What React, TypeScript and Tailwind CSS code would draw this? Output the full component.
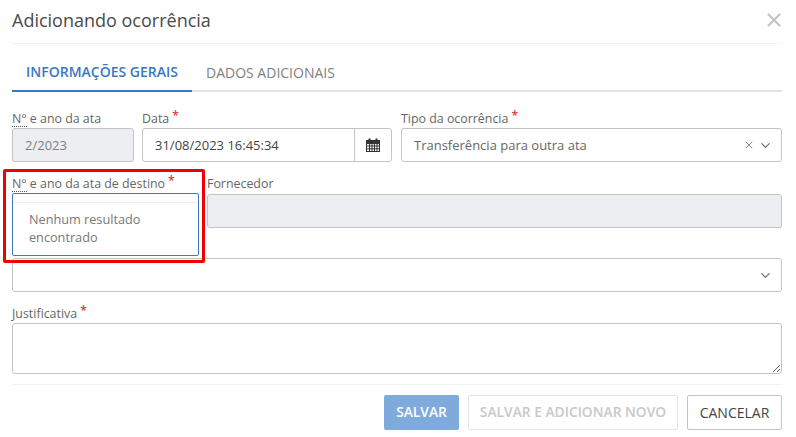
// App.tsx
import React from 'react';
import { X, ChevronDown } from 'lucide-react';

const Req = () => <span className="relative -top-[3px] ml-[3px] text-[12px] font-semibold leading-none text-[#e3342f]">*</span>;

const Label = ({ children, required, dotted }: { children: React.ReactNode; required?: boolean; dotted?: boolean }) => (
  <div className="relative flex h-[16px] items-center whitespace-nowrap pt-[2px] text-[12.4px] text-[#666]">
    {children}
    {required && <Req />}
    {dotted && <span className="absolute left-0 top-[16px] w-[15px] border-b border-dotted border-[#555]" />}
  </div>
);

const Calendar = () => (
  <svg width="14" height="14" viewBox="0 0 14 14" fill="none" stroke="#333" strokeWidth="1">
    <rect x="0.5" y="2.5" width="13" height="11" fill="#fff" />
    <path d="M0.5 5.5h13M0.5 8h13M0.5 10.8h13M3.5 5.5v8M6 5.5v8M8.5 5.5v8M11 5.5v8" />
    <path d="M0.5 2.5h13v3h-13z" fill="#333" />
    <path d="M3.5 0.5v3M10.5 0.5v3" strokeWidth="2" />
  </svg>
);

export default function App() {
  return (
    <div className="relative flex h-[437px] w-[796px] flex-col overflow-hidden bg-white pl-3 pr-[14px] font-['Open_Sans',sans-serif] text-[#555]">
      {/* Cabecalho */}
      <div className="flex h-[44px] shrink-0 items-start justify-between border-b border-[#f2f2f2] pt-[9px]">
        <h1 className="-mt-[2px] text-[18px] leading-[26px] text-[#4a4a4a]">Adicionando ocorrência</h1>
        <X size={22} strokeWidth={2.5} className="-mr-[3px] text-[#c4c4c4]" />
      </div>

      {/* Abas */}
      <div className="mt-[12px] flex h-[36px] shrink-0 border-b-2 border-[#e2e3e8] text-[14px]">
        <div className="-mb-[2px] flex h-[36px] w-[180px] items-center justify-center border-b-2 border-[#3a78c2] pb-[3px] font-semibold text-[#3a78c2]">
          INFORMAÇÕES GERAIS
        </div>
        <div className="flex h-[34px] items-center pb-[1px] pl-[14px] text-[#808080]">DADOS ADICIONAIS</div>
      </div>

      {/* Linha 1 */}
      <div className="mt-[18px] flex shrink-0">
        <div className="mr-[8px] w-[122px]">
          <Label dotted>N° e ano da ata</Label>
          <div className="mt-[2px] flex h-[34px] items-center rounded-[3px] border border-[#c4c4c4] bg-[#eceef1] pl-[12px] pt-[1px] text-[13px] text-[#808080]">2/2023</div>
        </div>
        <div className="mr-[9px] w-[250px]">
          <Label required>Data</Label>
          <div className="mt-[2px] flex h-[34px] rounded-[3px] border border-[#c4c4c4] text-[13px] text-[#444]">
            <div className="flex flex-1 items-center pl-[12px] pt-[1px]">31/08/2023 16:45:34</div>
            <div className="flex w-[37px] items-center justify-center border-l border-[#c4c4c4]"><Calendar /></div>
          </div>
        </div>
        <div className="flex-1">
          <Label required>Tipo da ocorrência</Label>
          <div className="mt-[2px] flex h-[34px] items-center rounded-[3px] border border-[#c4c4c4] pl-[12px] pr-[8px] text-[13px] text-[#666]">
            <span className="flex-1 pt-[1px]">Transferência para outra ata</span>
            <X size={12} strokeWidth={1.7} className="mr-[3px] text-[#777]" />
            <ChevronDown size={15} strokeWidth={1.8} className="text-[#666]" />
          </div>
        </div>
      </div>

      {/* Linha 2 */}
      <div className="relative mt-[13px] flex shrink-0">
        <div className="mr-[8px] w-[187px]">
          <Label required dotted>N° e ano da ata de destino</Label>
        </div>
        <div className="flex-1">
          <Label>Fornecedor</Label>
          <div className="mt-[3px] h-[34px] rounded-[3px] border border-[#c4c4c4] bg-[#eceef1]" />
        </div>
        {/* Menu aberto do select */}
        <div className="absolute left-0 top-[18px] z-10 h-[63px] w-[187px] rounded-[2px] border border-[#3a78c2] bg-white">
          <div className="h-[9px] border-b border-[#eeeeee]" />
          <div className="pl-[16px] pt-[7px] text-[12.7px] leading-[18px] text-[#777]">Nenhum resultado encontrado</div>
        </div>
        {/* Destaque vermelho */}
        <div className="absolute -left-[9px] -top-[6px] z-20 h-[94px] w-[202px] rounded-[2px] border-[3.5px] border-[#f00000]" />
      </div>

      {/* Linha 3 */}
      <div className="mt-[30px] flex h-[34px] shrink-0 items-center justify-end rounded-[3px] border border-[#c4c4c4] pr-[8px]">
        <ChevronDown size={15} strokeWidth={1.8} className="text-[#666]" />
      </div>

      {/* Justificativa */}
      <div className="mt-[13px] shrink-0">
        <Label required>Justificativa</Label>
        <textarea className="mt-[2px] block h-[51px] w-full resize-y rounded-[3px] border border-[#c4c4c4] outline-none" />
      </div>

      {/* Rodape */}
      <div className="mt-[10px] flex shrink-0 justify-end gap-[9px] border-t border-[#f2f2f2] pt-[10px]">
        <button className="h-[35px] w-[75px] rounded-[2px] bg-[#7eaadc] text-[13.8px] font-semibold text-white">SALVAR</button>
        <button className="h-[35px] w-[210px] rounded-[2px] border border-[#e4e4e4] text-[13.8px] font-semibold text-[#c8c8c8]">SALVAR E ADICIONAR NOVO</button>
        <button className="h-[35px] w-[95px] rounded-[2px] border border-[#c4c4c4] text-[14px] text-[#444]">CANCELAR</button>
      </div>
    </div>
  );
}
